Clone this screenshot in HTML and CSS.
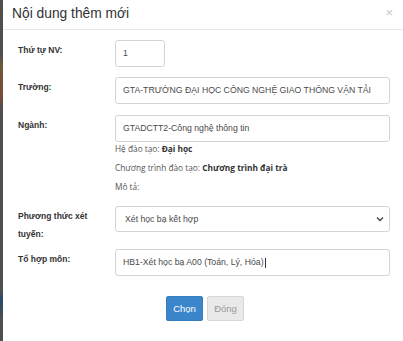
FILE: index.html
```html
<!DOCTYPE html>
<html>
<head>
<meta charset="utf-8">
<link rel="stylesheet" href="styles.css">
</head>
<body>
<div class="frame">
  <div class="edge"></div>
  <div class="modal">
    <div class="header">
      <h4 class="title">Nội dung thêm mới</h4>
      <span class="close">×</span>
    </div>
    <div class="body">
      <div class="row r1">
        <label class="lbl">Thứ tự NV:</label>
        <div class="field"><div class="input short">1</div></div>
      </div>
      <div class="row r2">
        <label class="lbl">Trường:</label>
        <div class="field"><div class="input">GTA-TRƯỜNG ĐẠI HỌC CÔNG NGHỆ GIAO THÔNG VẬN TẢI</div></div>
      </div>
      <div class="row r3">
        <label class="lbl">Ngành:</label>
        <div class="field">
          <div class="input">GTADCTT2-Công nghệ thông tin</div>
          <div class="info">Hệ đào tạo: <b>Đại học</b></div>
          <div class="info">Chương trình đào tạo: <b>Chương trình đại trà</b></div>
          <div class="info">Mô tả:</div>
        </div>
      </div>
      <div class="row r4">
        <label class="lbl two">Phương thức xét tuyến:</label>
        <div class="field">
          <div class="input select">Xét học bạ kết hợp
            <svg class="chev" width="8" height="6" viewBox="0 0 8 6"><path d="M1 1.5 L4 4.5 L7 1.5" fill="none" stroke="#444" stroke-width="1.4"/></svg>
          </div>
        </div>
      </div>
      <div class="row r5">
        <label class="lbl">Tổ hợp môn:</label>
        <div class="field"><div class="input">HB1-Xét học bạ A00 (Toán, Lý, Hóa)<span class="caret"></span></div></div>
      </div>
      <div class="footer">
        <button class="btn primary">Chọn</button>
        <button class="btn default">Đóng</button>
      </div>
    </div>
  </div>
</div>
</body>
</html>
```
FILE: styles.css
```css
html, body {
  margin: 0;
  padding: 0;
  background: #ffffff;
}
body {
  font-family: "Liberation Sans", Arial, sans-serif;
  color: #333;
}
.frame {
  display: flex;
  width: 403px;
  height: 341px;
  overflow: hidden;
}
.edge {
  width: 3px;
  flex: 0 0 3px;
  background: linear-gradient(#4f4f4f 0, #4f4f4f 55px, #6b5a3a 65px, #7a4b3a 95px, #4f4f4f 110px, #4f4f4f 290px, #2a4a6a 300px, #4f4f4f 320px);
}
.modal {
  flex: 1;
  background: #fff;
}
.header {
  display: flex;
  align-items: center;
  justify-content: space-between;
  height: 30px;
  border-bottom: 1px solid #e8e8e8;
  padding: 0 8px 0 9px;
  box-sizing: border-box;
}
.title {
  margin: 0;
  font-weight: normal;
  font-size: 13.8px;
  color: #333;
  position: relative;
  top: -1px;
}
.close {
  font-size: 13px;
  color: #c8c8c8;
  position: relative;
  top: -2px;
  margin-right: 2px;
}
.body {
  padding: 10px 10px 0 15px;
}
.row {
  display: flex;
  align-items: flex-start;
}
.lbl {
  width: 97px;
  flex: 0 0 97px;
  font-size: 8.5px;
  font-weight: bold;
  color: #333;
  padding-top: 1px;
  line-height: 18px;
}
.lbl.two {
  width: 85px;
  flex: 0 0 85px;
  margin-right: 12px;
  padding-top: 1px;
}
.field {
  flex: 1;
}
.input {
  height: 27px;
  box-sizing: border-box;
  border: 1px solid #d4d4d4;
  border-radius: 3px;
  padding: 0 7px;
  font-size: 8.7px;
  line-height: 25px;
  color: #4a4a4a;
  position: relative;
  width: 275px;
  white-space: nowrap;
}
.input.short {
  width: 50px;
}
.select {
  display: flex;
  align-items: center;
  justify-content: space-between;
  padding-left: 9px;
  height: 26px;
}
.chev {
  margin-right: -2px;
}
.caret {
  display: inline-block;
  width: 1px;
  height: 10px;
  background: #333;
  vertical-align: middle;
  margin-left: 1px;
}
.r1 { margin-bottom: 10px; }
.r2 { margin-bottom: 11px; }
.r3 { margin-bottom: 10px; }
.r4 { margin-bottom: 6px; }
.info {
  font-family: "Open Sans", "Noto Sans", sans-serif;
  font-size: 8.3px;
  color: #555;
  line-height: 19px;
}
.r3 .input + .info { margin-top: -3px; }
.info b { font-weight: 700; color: #333; }
.footer {
  display: flex;
  gap: 4px;
  padding-left: 148px;
  margin-top: 20px;
}
.btn {
  height: 25px;
  box-sizing: border-box;
  border-radius: 2px;
  font-family: "Liberation Sans", Arial, sans-serif;
  font-size: 9.5px;
  padding: 0;
  width: 37px;
}
.primary {
  background: #3b86cb;
  border: 1px solid #357ebd;
  color: #fff;
}
.default {
  background: #e9e9e9;
  border: 1px solid #d6d6d6;
  color: #999;
}
```
